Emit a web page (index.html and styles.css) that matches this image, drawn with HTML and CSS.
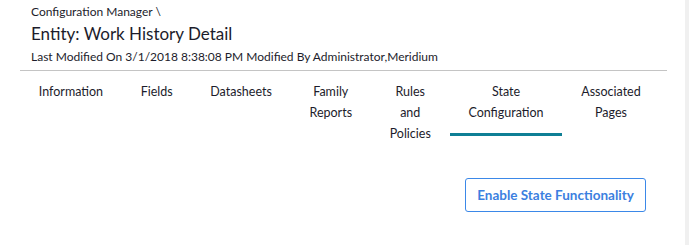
FILE: index.html
```html
<!DOCTYPE html>
<html>
  <head>
    <meta charset="UTF-8" />
    <title>Work History Detail</title>
    <link rel="stylesheet" href="styles.css">
  </head>
  <body>
    <div class="page">
      <!-- Header -->
      <div class="header">
        <div class="crumb">Configuration Manager \</div>
        <h1 class="title">Entity: Work History Detail</h1>
        <div class="meta">Last Modified On 3/1/2018 8:38:08 PM Modified By Administrator,Meridium</div>
      </div>

      <!-- Tabs -->
      <div class="tabs">
        <div class="tab">Information</div>
        <div class="tab">Fields</div>
        <div class="tab">Datasheets</div>
        <div class="tab">Family<br />Reports</div>
        <div class="tab">Rules<br />and<br />Policies</div>
        <div class="tab active">State<br />Configuration</div>
        <div class="tab">Associated<br />Pages</div>
      </div>

      <div class="actions">
        <button class="enable-btn">Enable State Functionality</button>
      </div>
    </div>
    <div class="scroll-edge"></div>
  </body>
</html>
```

FILE: styles.css
```css
body {
  font-family: Lato, "Liberation Sans", sans-serif;
  margin: 0;
  padding: 0;
  background-color: white;
  color: #1c1c2b;
}

.page {
  width: 647px;
  margin-left: 20px;
}

.header {
  padding: 2px 11px 0;
  border-bottom: 1px solid #c4c4c4;
  height: 68px;
}

.crumb {
  font-size: 12px;
  line-height: 20px;
}

.title {
  font-size: 17px;
  font-weight: normal;
  line-height: 24px;
  margin: 0;
}

.meta {
  font-size: 12px;
  line-height: 22px;
}

.tabs {
  display: flex;
  align-items: flex-start;
  padding-top: 10px;
}

.tab {
  font-size: 12.5px;
  line-height: 21px;
  text-align: center;
  padding: 0 18.8px 10px;
  border-bottom: 3px solid transparent;
}

.tab.active {
  border-bottom-color: #0f7f95;
}

.actions {
  display: flex;
  justify-content: flex-end;
  padding: 21px 21px 0 0;
}

.enable-btn {
  font-family: Lato, "Liberation Sans", sans-serif;
  font-size: 13.5px;
  font-weight: bold;
  color: #3b7fe0;
  background: white;
  border: 1px solid #3b88e8;
  border-radius: 3px;
  width: 181px;
  height: 34px;
  cursor: pointer;
}

.scroll-edge {
  position: fixed;
  top: 0;
  right: 0;
  width: 4px;
  height: 100%;
  background-color: #f0f0f0;
}
```
